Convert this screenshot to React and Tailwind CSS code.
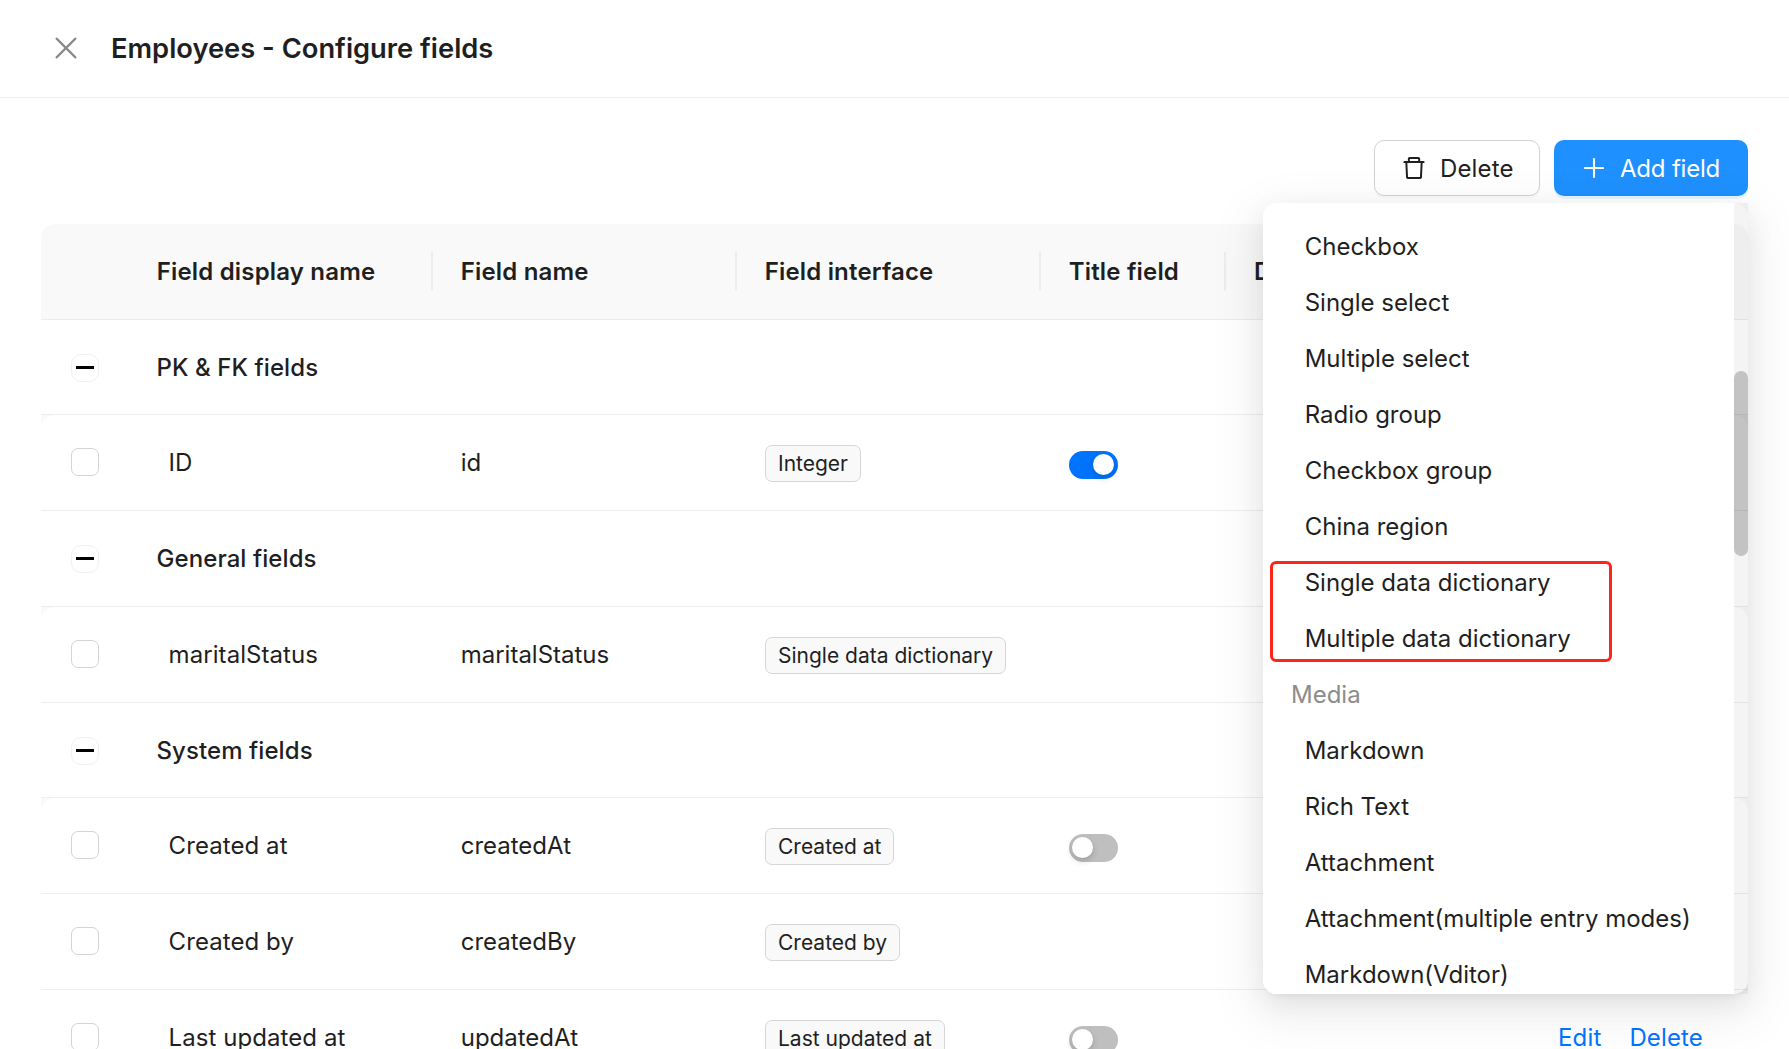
import { AiOutlineDelete, AiOutlinePlus } from "react-icons/ai";

const columns = [
  { label: "Field display name", width: "w-[304px]" },
  { label: "Field name", width: "w-[304px]" },
  { label: "Field interface", width: "w-[304px]" },
  { label: "Title field", width: "w-[185px]" },
];

const groups = [
  {
    title: "PK & FK fields",
    height: "h-[95px] pt-[2px]",
    rows: [{ label: "ID", name: "id", tag: "Integer", title: "on" }],
  },
  {
    title: "General fields",
    height: "h-[96px] pt-px",
    rows: [{ label: "maritalStatus", name: "maritalStatus", tag: "Single data dictionary" }],
  },
  {
    title: "System fields",
    height: "h-[95px] pt-[2px]",
    rows: [
      { label: "Created at", name: "createdAt", tag: "Created at", title: "off" },
      { label: "Created by", name: "createdBy", tag: "Created by" },
      { label: "Last updated at", name: "updatedAt", tag: "Last updated at", title: "off", actions: true },
    ],
  },
];

const choiceItems = ["Checkbox", "Single select", "Multiple select", "Radio group", "Checkbox group", "China region"];
const dictionaryItems = ["Single data dictionary", "Multiple data dictionary"];
const mediaItems = ["Markdown", "Rich Text", "Attachment", "Attachment(multiple entry modes)", "Markdown(Vditor)"];

function CloseIcon() {
  return (
    <svg className="-mt-0.5" width="24" height="24" viewBox="0 0 24 24" fill="none" stroke="#8a8a8a" strokeWidth="2.2" strokeLinecap="round">
      <path d="M2.6 2.6 21.4 21.4M21.4 2.6 2.6 21.4" />
    </svg>
  );
}

function Header() {
  return (
    <header className="flex h-[98px] items-center border-b border-[#eeeeee] pl-[54px]">
      <CloseIcon />
      <h1 className="ml-[33px] text-[27.3px] leading-10 font-semibold">Employees - Configure fields</h1>
    </header>
  );
}

function Toolbar() {
  return (
    <div className="flex h-14 justify-end gap-[14px]">
      <button className="flex h-14 w-[166px] items-center gap-3 rounded-[10px] border border-[#d2d2d2] bg-white pl-[25px] tracking-[0.15px] shadow-[0_3px_0_rgba(0,0,0,0.02)]">
        <AiOutlineDelete className="-mt-px size-7 shrink-0" />
        <span className="pt-0.5">Delete</span>
      </button>
      <button className="flex h-14 w-[194px] items-center gap-3 rounded-[10px] bg-[#1f90ff] pl-[26px] tracking-[-0.2px] text-white shadow-[0_3px_0_rgba(5,145,255,0.1)]">
        <AiOutlinePlus className="-mt-px size-7 shrink-0" />
        <span className="pt-0.5">Add field</span>
      </button>
    </div>
  );
}

function Toggle({ on }) {
  return (
    <div className={on ? "mt-[5px] h-7 w-[49px] rounded-full bg-[#0073fe] pt-[3px] pl-6" : "mt-[5px] h-7 w-[49px] rounded-full bg-[#bfbfbf] pt-[3px] pl-[3px]"}>
      <div className="size-[21px] rounded-full bg-white shadow-[0_3px_7px_rgba(0,35,11,0.2)]" />
    </div>
  );
}

function TableHead() {
  return (
    <div className="flex h-24 items-center rounded-t-[14px] border-b border-[#ececec] bg-[#f9f9f9] font-semibold tracking-[0.18px]">
      <div className="w-[88px]" />
      {columns.map((c) => (
        <div key={c.label} className={`${c.width} flex h-[39px] items-center border-r-2 border-[#ededed] pl-[27.7px]`}>
          {c.label}
        </div>
      ))}
      <div className="flex-1 pl-7">D</div>
    </div>
  );
}

function GroupRow({ group }) {
  return (
    <div className={`${group.height} flex items-center border-b border-[#eeeeee]`}>
      <div className="flex w-[88px] pl-[30px]">
        <div className="flex size-7 items-center rounded-[10px] border border-[#f0f0f0] pl-1">
          <div className="mb-px h-[2.5px] w-[17.5px] bg-black" />
        </div>
      </div>
      <div className="pl-[27.5px] font-medium tracking-[0.08px]">{group.title}</div>
    </div>
  );
}

function FieldRow({ row, first }) {
  return (
    <div className={first ? "bg-[#f9f9f9]" : ""}>
      <div className={`flex h-24 items-center border-b border-[#eeeeee] bg-white ${first ? "rounded-t-[14px]" : ""}`}>
        <div className="flex w-[88px] pl-[30px]">
          <div className="mb-px size-7 rounded-[7px] border border-[#d4d4d4] bg-white" />
        </div>
        <div className="w-[304px] pl-[39.6px] tracking-[0.07px]">{row.label}</div>
        <div className="w-[304px] pl-[27.7px]">{row.name}</div>
        <div className="flex w-[304px] pl-7">
          <span className="mt-0.5 flex h-[37px] items-center rounded-[7px] border border-[#d6d6d6] bg-[#f9f9f9] px-3 text-[21px] leading-none">
            {row.tag}
          </span>
        </div>
        <div className="w-[517px] pl-7">{row.title && <Toggle on={row.title === "on"} />}</div>
        {row.actions && (
          <div className="flex gap-[28px] tracking-[0.15px] text-[#0075ff]">
            <a>Edit</a>
            <a>Delete</a>
          </div>
        )}
      </div>
    </div>
  );
}

function FieldsTable() {
  return (
    <div className="mt-7">
      <TableHead />
      {groups.map((g) => (
        <section key={g.title}>
          <GroupRow group={g} />
          {g.rows.map((r, i) => (
            <FieldRow key={r.label} row={r} first={i === 0} />
          ))}
        </section>
      ))}
    </div>
  );
}

function MenuItem({ children }) {
  return <li className="flex h-14 items-center pl-[41.7px]">{children}</li>;
}

function FieldTypeMenu() {
  return (
    <div className="absolute top-[203px] left-[1263px] flex h-[791px] w-[485px] rounded-[14px] shadow-[0_10px_28px_rgba(0,0,0,0.08),0_5px_10px_-7px_rgba(0,0,0,0.12),0_16px_49px_14px_rgba(0,0,0,0.05)]">
      <ul className="w-[471px] overflow-hidden rounded-l-[14px] bg-white pt-4">
        {choiceItems.map((t) => (
          <MenuItem key={t}>{t}</MenuItem>
        ))}
        <li className="relative">
          <ul>
            {dictionaryItems.map((t) => (
              <MenuItem key={t}>{t}</MenuItem>
            ))}
          </ul>
          <div className="absolute top-[6px] left-[7px] h-[101px] w-[342px] rounded-md border-3 border-[#fc2519]" />
        </li>
        <li className="flex h-14 items-center pl-7 text-[#8c8c8c]">Media</li>
        {mediaItems.map((t) => (
          <MenuItem key={t}>{t}</MenuItem>
        ))}
      </ul>
      <div className="w-[14px] bg-black/[0.045] pt-[168px]">
        <div className="h-[185px] rounded-full bg-black/20" />
      </div>
    </div>
  );
}

export default function App() {
  return (
    <div className="relative h-[1049px] w-[1789px] overflow-hidden bg-white font-['Inter',sans-serif] text-2xl leading-8 whitespace-nowrap text-[#1f1f1f]">
      <Header />
      <main className="px-[41px] pt-[42px]">
        <Toolbar />
        <FieldsTable />
      </main>
      <FieldTypeMenu />
    </div>
  );
}
